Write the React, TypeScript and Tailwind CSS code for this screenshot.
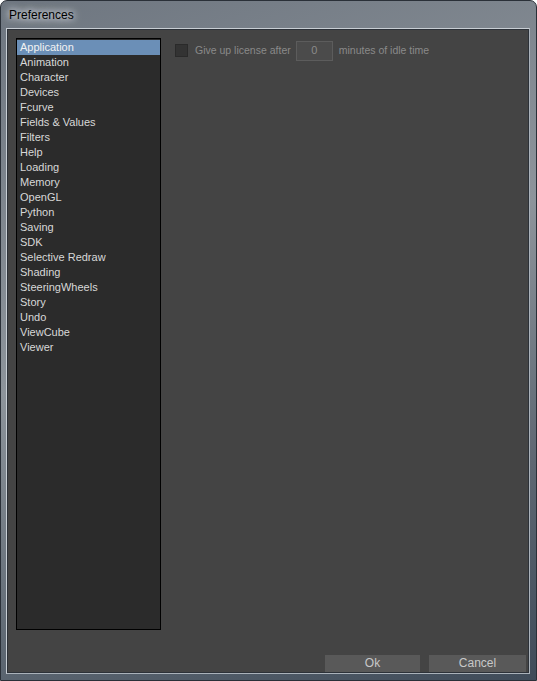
const items = [
  'Application',
  'Animation',
  'Character',
  'Devices',
  'Fcurve',
  'Fields & Values',
  'Filters',
  'Help',
  'Loading',
  'Memory',
  'OpenGL',
  'Python',
  'Saving',
  'SDK',
  'Selective Redraw',
  'Shading',
  'SteeringWheels',
  'Story',
  'Undo',
  'ViewCube',
  'Viewer',
];

export default function App() {
  const selected = 'Application';

  return (
    <div
      className="flex h-[681px] w-[537px] flex-col rounded-t-[7px] border border-[#2a3038] bg-[linear-gradient(160deg,#6e7680_0%,#8d949b_45%,#5d6772_75%,#3f4b59_100%)] font-['Liberation_Sans',Arial,sans-serif]"
    >
      {/* Title bar */}
      <div className="flex h-[27px] shrink-0 items-center pl-[8px]">
        <span className="text-[12px] text-black [text-shadow:0_0_6px_#e8ecf0,0_0_10px_#e8ecf0]">
          Preferences
        </span>
      </div>

      {/* Client area */}
      <div className="mb-[6px] ml-[5px] mr-[6px] flex flex-1 flex-col border border-[#c8ced4] border-b-[#aab2ba] border-r-[#aab2ba]">
        <div className="flex flex-1 flex-col border border-[#2c3138] bg-[#444444]">
          <div className="flex flex-1 pl-[8px] pt-[8px]">
            {/* Category list */}
            <div className="h-[592px] w-[145px] shrink-0 border border-black bg-[#2b2b2b]">
              <ul className="pt-[1px]">
                {items.map((item) => (
                  <li
                    key={item}
                    className={
                      item === selected
                        ? 'h-[15px] bg-[#6b8fb7] pl-[3px] text-[11px] leading-[15px] text-[#f2f2f2]'
                        : 'h-[15px] pl-[3px] text-[11px] leading-[15px] text-[#d8d8d8]'
                    }
                  >
                    {item}
                  </li>
                ))}
              </ul>
            </div>

            {/* Application page */}
            <div className="flex h-[22px] items-center pl-[14px] pt-[3px]">
              <div className="h-[13px] w-[13px] border border-[#2a2a2a] bg-[#333333]" />
              <span className="ml-[7px] text-[10.5px] text-[#8a8a8a]">Give up license after</span>
              <div className="ml-[5px] flex h-[20px] w-[37px] items-center justify-center border border-[#5c5c5c] bg-[#4b4b4b] text-[11px] text-[#8a8a8a]">
                0
              </div>
              <span className="ml-[6px] text-[10.5px] text-[#8a8a8a]">minutes of idle time</span>
            </div>
          </div>

          {/* Buttons */}
          <div className="flex justify-end gap-[9px] pb-0 pr-[2px]">
            <button className="h-[17px] w-[95px] bg-[#595959] text-[12px] leading-[17px] text-[#c8c8c8]">
              Ok
            </button>
            <button className="h-[17px] w-[97px] bg-[#595959] text-[12px] leading-[17px] text-[#c8c8c8]">
              Cancel
            </button>
          </div>
        </div>
      </div>
    </div>
  );
}
